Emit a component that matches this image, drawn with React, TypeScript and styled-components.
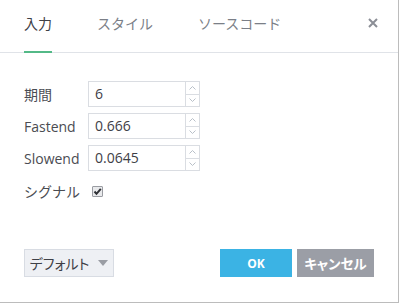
import styled, { createGlobalStyle } from 'styled-components';

const GlobalStyle = createGlobalStyle`
  html, body {
    margin: 0;
    padding: 0;
    background: #ffffff;
  }
  body {
    font-family: 'Open Sans', 'Noto Sans CJK JP', sans-serif;
    color: #4a4c52;
  }
`;

const Dialog = styled.div`
  width: 398px;
  height: 302px;
  border-right: 1px solid #bcbcbc;
  border-bottom: 1px solid #bcbcbc;
  display: flex;
  flex-direction: column;
  background: #fff;
`;

const Header = styled.div`
  height: 53px;
  box-sizing: border-box;
  border-bottom: 1px solid #e0e3e8;
  display: flex;
  align-items: flex-start;
  padding: 0 20px 0 24px;
  gap: 45px;
`;

const Tab = styled.div<{ active?: boolean }>`
  height: 53px;
  box-sizing: border-box;
  margin-bottom: -1px;
  padding-top: 14px;
  font-size: 14px;
  line-height: 20px;
  color: ${(p) => (p.active ? '#3e4047' : '#7b7f87')};
  border-bottom: 2px solid ${(p) => (p.active ? '#53b987' : 'transparent')};
`;

const Close = styled.button`
  margin-left: auto;
  margin-top: 18px;
  width: 10px;
  height: 10px;
  padding: 0;
  border: none;
  background: none;
  display: flex;
  cursor: pointer;
`;

const Body = styled.div`
  padding: 28px 24px 0;
  display: flex;
  flex-direction: column;
  gap: 6px;
`;

const Row = styled.div<{ tall?: boolean }>`
  display: flex;
  align-items: center;
  height: ${(p) => (p.tall ? '28px' : '26px')};
`;

const Label = styled.span<{ width?: number }>`
  width: ${(p) => (p.width ? `${p.width}px` : '64px')};
  font-size: 14px;
  color: #4a4c52;
`;

const NumberBox = styled.div`
  width: 112px;
  height: 26px;
  box-sizing: border-box;
  border: 1px solid #dadde2;
  display: flex;
`;

const Value = styled.div`
  flex: 1;
  padding-left: 6px;
  font-size: 14px;
  line-height: 24px;
  color: #3e4047;
`;

const Spinner = styled.div`
  width: 13px;
  border-left: 1px solid #dadde2;
  display: flex;
  flex-direction: column;
`;

const SpinHalf = styled.div<{ top?: boolean }>`
  flex: 1;
  display: flex;
  align-items: center;
  justify-content: center;
  border-bottom: ${(p) => (p.top ? '1px solid #dadde2' : 'none')};
`;

const Check = styled.div`
  width: 11px;
  height: 11px;
  box-sizing: border-box;
  border: 1px solid #9a9ca2;
  border-radius: 1px;
  background: #e9eaec;
  display: flex;
  align-items: center;
  justify-content: center;
`;

const Footer = styled.div`
  margin-top: auto;
  padding: 0 24px 25px;
  display: flex;
  align-items: center;
  gap: 5px;
`;

const Button = styled.button<{ kind: 'default' | 'ok' | 'cancel' }>`
  height: 28px;
  box-sizing: border-box;
  padding: 0;
  font-family: inherit;
  font-feature-settings: 'palt';
  font-size: ${(p) => (p.kind === 'ok' ? '12px' : p.kind === 'cancel' ? '13.5px' : '14px')};
  font-weight: ${(p) => (p.kind === 'default' ? 400 : 700)};
  color: ${(p) => (p.kind === 'default' ? '#3e4047' : '#ffffff')};
  background: ${(p) =>
    p.kind === 'ok' ? '#3bb3e4' : p.kind === 'cancel' ? '#9b9ea6' : '#eef0f4'};
  border: ${(p) => (p.kind === 'default' ? '1px solid #d8dce3' : 'none')};
  width: ${(p) => (p.kind === 'ok' ? '72px' : p.kind === 'cancel' ? '77px' : '90px')};
  display: flex;
  align-items: center;
  justify-content: center;
  gap: 9px;
  cursor: pointer;
`;

const Spacer = styled.div`
  flex: 1;
`;

const Caret = styled.span`
  width: 0;
  height: 0;
  border-left: 5px solid transparent;
  border-right: 5px solid transparent;
  border-top: 6px solid #9a9da4;
`;

function Arrow({ up }: { up?: boolean }) {
  return (
    <svg width="7" height="4" viewBox="0 0 7 4">
      <path
        d={up ? 'M0.5 3.5 L3.5 0.5 L6.5 3.5' : 'M0.5 0.5 L3.5 3.5 L6.5 0.5'}
        fill="none"
        stroke="#b9c0c8"
        strokeWidth="1"
      />
    </svg>
  );
}

function NumberField({ value }: { value: string }) {
  return (
    <NumberBox>
      <Value>{value}</Value>
      <Spinner>
        <SpinHalf top>
          <Arrow up />
        </SpinHalf>
        <SpinHalf>
          <Arrow />
        </SpinHalf>
      </Spinner>
    </NumberBox>
  );
}

const fields = [
  { label: '期間', value: '6' },
  { label: 'Fastend', value: '0.666' },
  { label: 'Slowend', value: '0.0645' },
];

export default function App() {
  return (
    <>
      <GlobalStyle />
      <Dialog>
        <Header>
          <Tab active>入力</Tab>
          <Tab>スタイル</Tab>
          <Tab>ソースコード</Tab>
          <Close aria-label="close">
            <svg width="10" height="10" viewBox="0 0 10 10">
              <path d="M1 1 L9 9 M9 1 L1 9" stroke="#8b8e96" strokeWidth="2" />
            </svg>
          </Close>
        </Header>
        <Body>
          {fields.map((f) => (
            <Row key={f.label}>
              <Label>{f.label}</Label>
              <NumberField value={f.value} />
            </Row>
          ))}
          <Row tall>
            <Label width={68}>シグナル</Label>
            <Check>
              <svg width="9" height="9" viewBox="0 0 9 9">
                <path d="M1.5 4.5 L3.5 6.8 L7.8 1.8" fill="none" stroke="#2f3136" strokeWidth="2" />
              </svg>
            </Check>
          </Row>
        </Body>
        <Footer>
          <Button kind="default">
            デフォルト
            <Caret />
          </Button>
          <Spacer />
          <Button kind="ok">OK</Button>
          <Button kind="cancel">キャンセル</Button>
        </Footer>
      </Dialog>
    </>
  );
}
